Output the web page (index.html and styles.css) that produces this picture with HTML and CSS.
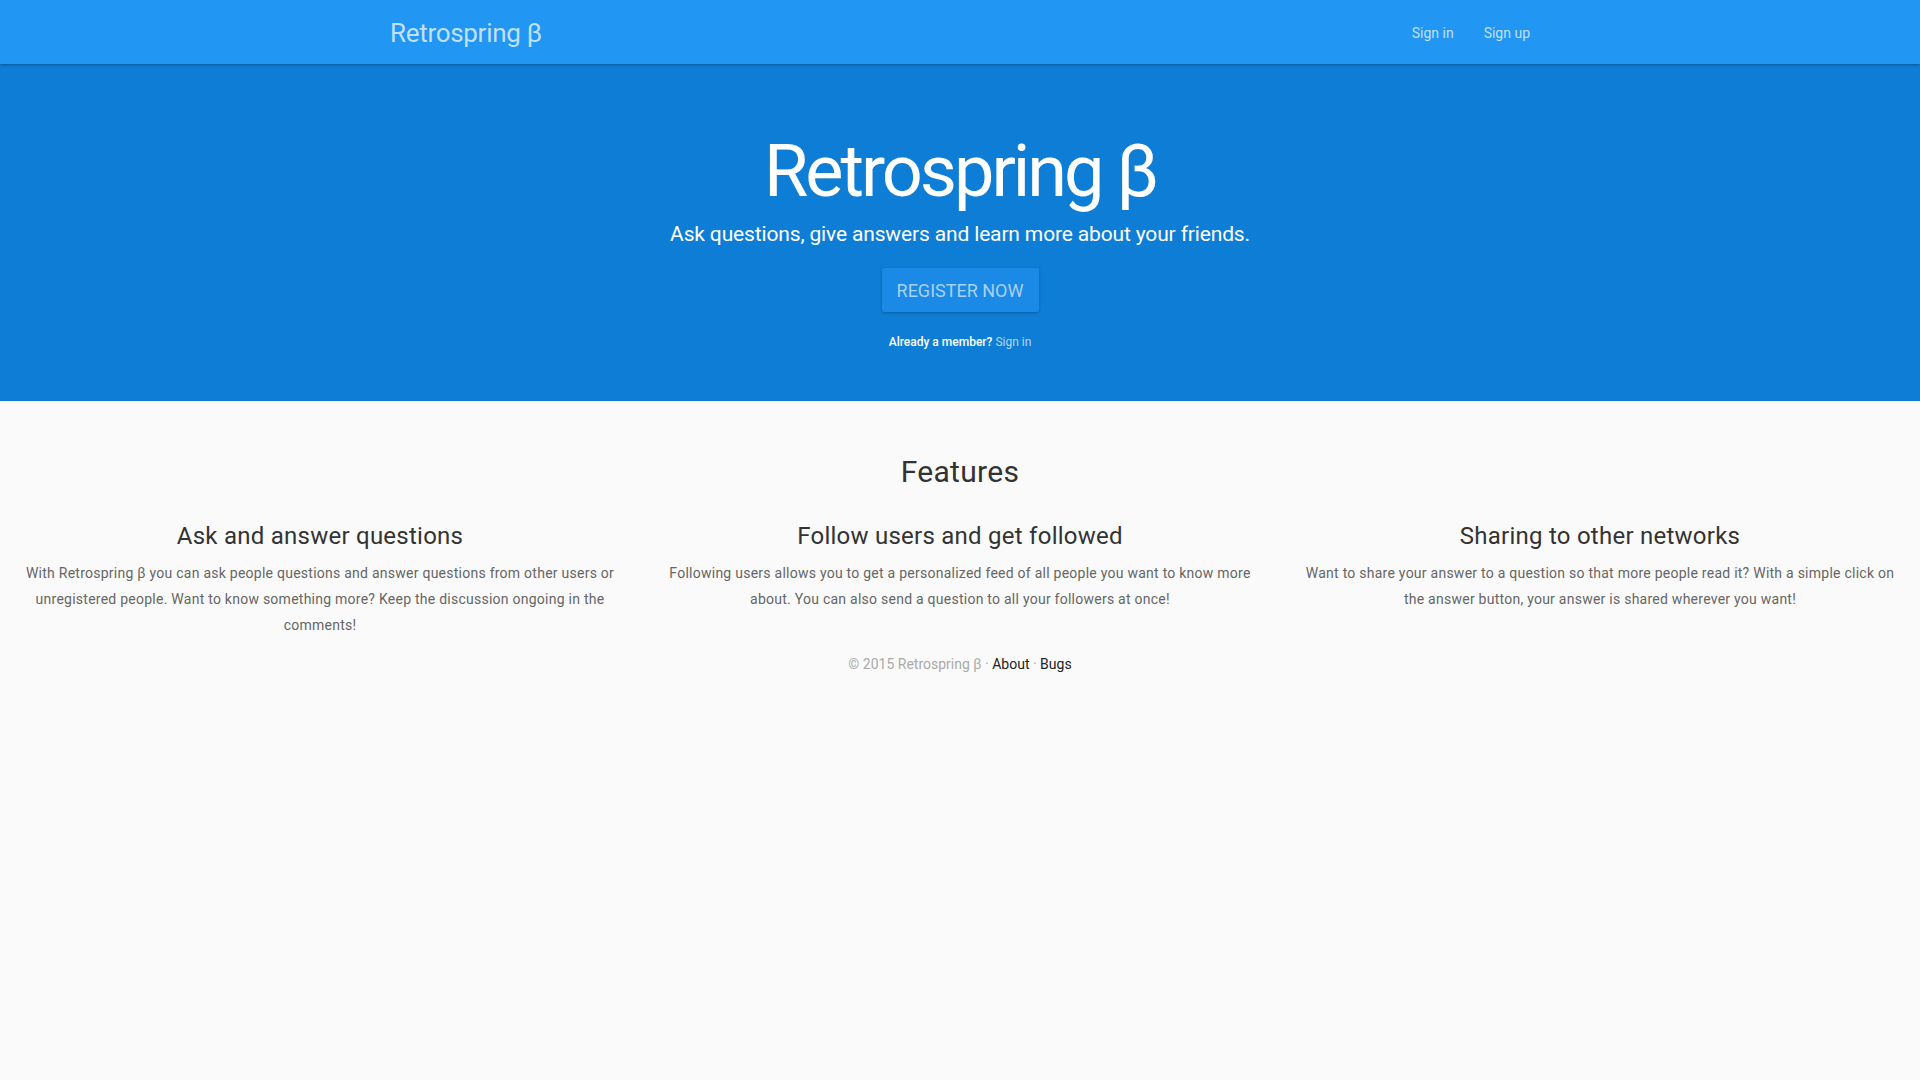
FILE: index.html
```html
<!DOCTYPE html>
<html lang="en">
<head>
<meta charset="utf-8">
<title>Retrospring β</title>
<link rel="stylesheet" href="styles.css">
</head>
<body>
<nav class="navbar">
  <div class="nav-inner">
    <a class="brand" href="#">Retrospring β</a>
    <div class="nav-links">
      <a href="#">Sign in</a>
      <a href="#">Sign up</a>
    </div>
  </div>
</nav>
<header class="hero">
  <h1 class="hero-title">Retrospring β</h1>
  <p class="hero-sub">Ask questions, give answers and learn more about your friends.</p>
  <a class="btn-register" href="#">REGISTER NOW</a>
  <p class="hero-member">Already a member? <a href="#">Sign in</a></p>
</header>
<main class="features">
  <h2 class="features-title">Features</h2>
  <div class="feature-row">
    <div class="feature">
      <h3>Ask and answer questions</h3>
      <p>With Retrospring β you can ask people questions and answer questions from other users or unregistered people. Want to know something more? Keep the discussion ongoing in the comments!</p>
    </div>
    <div class="feature">
      <h3>Follow users and get followed</h3>
      <p>Following users allows you to get a personalized feed of all people you want to know more about. You can also send a question to all your followers at once!</p>
    </div>
    <div class="feature">
      <h3>Sharing to other networks</h3>
      <p>Want to share your answer to a question so that more people read it? With a simple click on the answer button, your answer is shared wherever you want!</p>
    </div>
  </div>
  <footer class="footer">© 2015 Retrospring β · <a href="#">About</a> · <a href="#">Bugs</a></footer>
</main>
</body>
</html>
```
FILE: styles.css
```css
* { box-sizing: border-box; }
html, body { margin: 0; padding: 0; }
body {
  background: #fafafa;
  font-family: Roboto, "Noto Sans", sans-serif;
  color: #333;
  min-height: 1080px;
}
a { text-decoration: none; }

.navbar {
  height: 64px;
  background: #2196f3;
  box-shadow: 0 1px 3px rgba(0,0,0,0.3);
  position: relative;
  z-index: 2;
}
.nav-inner {
  width: 1140px;
  margin: 0 auto;
  height: 64px;
  display: flex;
  align-items: center;
  justify-content: space-between;
}
.brand {
  color: rgba(255,255,255,0.72);
  font-size: 26px;
  letter-spacing: -0.3px;
  margin-top: 2px;
}
.nav-links { display: flex; gap: 30px; margin-top: 2px; }
.nav-links a {
  color: rgba(255,255,255,0.72);
  font-size: 14px;
}

.hero {
  background: #0e7dd5;
  height: 337px;
  display: flex;
  flex-direction: column;
  align-items: center;
  padding-top: 68px;
  color: #fff;
}
.hero-title {
  margin: 0;
  font-size: 72px;
  font-weight: 400;
  line-height: 80px;
  letter-spacing: -3px;
}
.hero-sub {
  margin: 7px 0 0;
  font-size: 21px;
  line-height: 30px;
  letter-spacing: -0.15px;
}
.btn-register {
  margin-top: 19px;
  width: 157px;
  height: 44px;
  display: flex;
  align-items: center;
  justify-content: center;
  background: #1a8ae6;
  color: #a9d0f5;
  font-size: 18px;
  border-radius: 2px;
  box-shadow: 0 1px 3px rgba(0,0,0,0.25);
}
.hero-member {
  margin: 22px 0 0;
  font-size: 12px;
  font-weight: 500;
  line-height: 17px;
}
.hero-member a { color: #b6d8f7; font-weight: 400; }

.features {
  text-align: center;
  padding-top: 53px;
}
.features-title {
  margin: 0;
  font-size: 30px;
  font-weight: 400;
  line-height: 36px;
  color: #333;
  letter-spacing: 0.3px;
}
.feature-row {
  display: grid;
  grid-template-columns: repeat(3, 1fr);
  margin-top: 31px;
}
.feature { padding: 0 20px; }
.feature h3 {
  margin: 0;
  font-size: 24px;
  font-weight: 400;
  line-height: 30px;
  color: #333;
  letter-spacing: 0.25px;
}
.feature p {
  margin: 9px 0 0;
  font-size: 14px;
  line-height: 26px;
  color: #666;
  letter-spacing: 0.25px;
}
.footer {
  margin-top: 16px;
  font-size: 14px;
  line-height: 20px;
  color: #aaa;
}
.footer a { color: #222; }
```
